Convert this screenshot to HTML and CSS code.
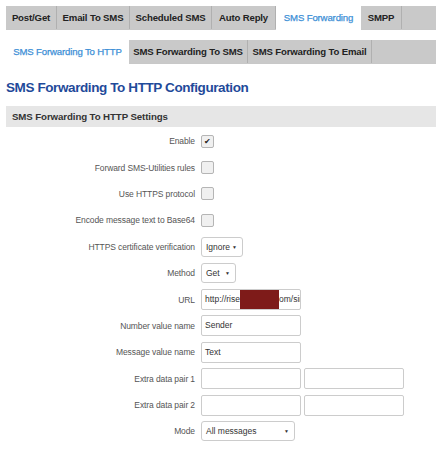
FILE: index.html
```html
<!DOCTYPE html>
<html lang="en">
<head>
  <meta charset="UTF-8" />
  <title>SMS Forwarding To HTTP</title>
  <link rel="stylesheet" href="styles.css">
</head>
<body>

<div class="page">
  <ul class="tabs">
    <li class="t-post">Post/Get</li>
    <li class="t-email">Email To SMS</li>
    <li class="t-sched">Scheduled SMS</li>
    <li class="t-auto">Auto Reply</li>
    <li class="t-fwd active">SMS Forwarding</li>
    <li class="t-smpp">SMPP</li>
    <li class="filler"></li>
  </ul>

  <ul class="tabs sub">
    <li class="t-http active">SMS Forwarding To HTTP</li>
    <li class="t-sms">SMS Forwarding To SMS</li>
    <li class="t-mail">SMS Forwarding To Email</li>
    <li class="filler"></li>
  </ul>

  <h2>SMS Forwarding To HTTP Configuration</h2>

  <div class="section">
    <h3>SMS Forwarding To HTTP Settings</h3>

    <div class="row first"><label>Enable</label><span class="check checked">&#10004;</span></div>
    <div class="row"><label>Forward SMS-Utilities rules</label><span class="check"></span></div>
    <div class="row"><label>Use HTTPS protocol</label><span class="check"></span></div>
    <div class="row"><label>Encode message text to Base64</label><span class="check"></span></div>
    <div class="row"><label>HTTPS certificate verification</label><span class="select w-ignore">Ignore<i>&#9660;</i></span></div>
    <div class="row"><label>Method</label><span class="select w-get">Get<i>&#9660;</i></span></div>
    <div class="row">
      <label>URL</label>
      <span class="input">http://rise<b class="redact"></b>om/sir</span>
    </div>
    <div class="row"><label>Number value name</label><span class="input">Sender</span></div>
    <div class="row"><label>Message value name</label><span class="input">Text</span></div>
    <div class="row"><label>Extra data pair 1</label><span class="input"></span><span class="input"></span></div>
    <div class="row"><label>Extra data pair 2</label><span class="input"></span><span class="input"></span></div>
    <div class="row"><label>Mode</label><span class="select w-mode">All messages<i>&#9660;</i></span></div>
  </div>
</div>

</body>
</html>
```

FILE: styles.css
```css
body {
  margin: 0;
  background: #fff;
  font-family: "Liberation Sans", Arial, sans-serif;
  color: #404040;
}

.page {
  padding: 6px 0 0 6px;
}

.tabs {
  list-style: none;
  margin: 0;
  padding: 0;
  display: flex;
  height: 23px;
  border-bottom: 1px solid #c8c8c8;
}

.tabs li {
  box-sizing: border-box;
  background: #c9c9c9;
  border-right: 1px solid #b0b0b0;
  font-size: 9.6px;
  letter-spacing: -0.15px;
  font-weight: bold;
  color: #222;
  line-height: 23px;
  text-align: center;
  white-space: nowrap;
  flex-shrink: 0;
}

.tabs li.active {
  background: #fff;
  color: #3d8fd6;
  font-weight: normal;
  -webkit-text-stroke: 0.25px #3d8fd6;
  border-right: none;
  height: 24px;
}

.tabs li.filler {
  flex: 1;
  border-right: none;
}

.t-post { width: 51px; }
.t-email { width: 73px; }
.t-sched { width: 82px; }
.t-auto { width: 64px; }
.t-fwd { width: 85px; }
.t-smpp { width: 41px; }

.tabs.sub {
  margin-top: 10px;
}

.t-http { width: 123px; }
.t-sms { width: 119px; }
.t-mail { width: 124px; }

h2 {
  margin: 14px 0 0 0;
  font-size: 13.5px;
  letter-spacing: -0.4px;
  color: #1f4a9a;
  line-height: 20px;
}

.section {
  margin-top: 8px;
  border-bottom: 1px solid #e0e0e0;
  padding-bottom: 7px;
}

h3 {
  margin: 0;
  background: #e6e6e6;
  font-size: 9.7px;
  letter-spacing: -0.1px;
  color: #333;
  line-height: 21px;
  padding-left: 6px;
}

.row {
  display: flex;
  align-items: center;
  height: 26.4px;
}

.row.first {
  margin-top: 1px;
}

.row label {
  width: 189px;
  text-align: right;
  font-size: 8.5px;
  letter-spacing: -0.1px;
  color: #555;
  padding-right: 6px;
}

.check {
  width: 11px;
  height: 11px;
  border: 1px solid #b5b5b5;
  border-radius: 2px;
  background: #f0f0f0;
  font-size: 8px;
  line-height: 11px;
  text-align: center;
  color: #222;
}

.select {
  display: flex;
  justify-content: space-between;
  align-items: center;
  box-sizing: border-box;
  height: 20px;
  border: 1px solid #ccc;
  border-radius: 3px;
  font-size: 8.5px;
  color: #333;
  padding: 0 5px 0 4px;
}

.select i {
  font-style: normal;
  font-size: 5px;
}

.w-ignore { width: 42px; }
.w-get { width: 35px; }
.w-mode { width: 94px; }

.input {
  box-sizing: border-box;
  width: 100px;
  height: 21px;
  border: 1px solid #ccc;
  border-radius: 2px;
  font-size: 8.5px;
  color: #333;
  line-height: 19px;
  padding-left: 3px;
  margin-right: 3px;
  white-space: nowrap;
  overflow: hidden;
}

.redact {
  display: inline-block;
  vertical-align: top;
  margin-top: -1px;
  width: 39px;
  height: 21px;
  background: #7e1b19;
}
```
